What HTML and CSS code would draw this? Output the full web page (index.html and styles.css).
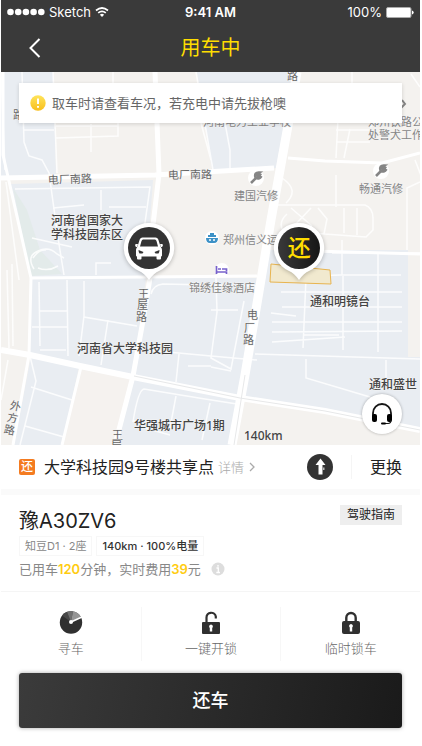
FILE: index.html
```html
<!DOCTYPE html>
<html lang="zh-CN">
<head>
<meta charset="utf-8">
<meta name="viewport" content="width=device-width, initial-scale=1">
<title>用车中</title>
<link rel="stylesheet" href="styles.css">
</head>
<body>
<div class="screen">
  <header class="top">
    <div class="status">
      <div class="status-left">
        <svg class="signal" viewBox="0 0 38 8" aria-hidden="true"><circle cx="3.500" cy="4" r="3.300"/><circle cx="11.200" cy="4" r="3.300"/><circle cx="18.900" cy="4" r="3.300"/><circle cx="26.600" cy="4" r="3.300"/><circle cx="34.300" cy="4" r="3.300"/></svg>
        <span>Sketch</span>
        <svg class="wifi" viewBox="0 0 14 10" aria-hidden="true"><path d="M1 3.500Q7-1.500 13 3.500M3.200 5.900Q7 2.700 10.800 5.900" fill="none" stroke="#fff" stroke-width="1.700"/><path d="M4.900 7.700Q7 6 9.100 7.700L7 9.900Z"/></svg>
      </div>
      <span class="clock">9:41 AM</span>
      <div class="status-right">
        <span>100%</span>
        <svg class="battery" viewBox="0 0 28 11" aria-hidden="true"><rect x=".5" y=".5" width="24.500" height="10" rx="1.500" fill="#fff" stroke="#aaa"/><path d="M26 3.500q1.700.5 1.700 2t-1.700 2z"/></svg>
      </div>
    </div>
    <nav class="nav">
      <button class="back" type="button" aria-label="返回"><svg viewBox="0 0 12 20"><path d="M10.500 1 1.500 10l9 9" fill="none" stroke="#fff" stroke-width="2"/></svg></button>
      <h1>用车中</h1>
    </nav>
  </header>

  <main class="map">
    <svg class="map-canvas" viewBox="1 72 419 373" preserveAspectRatio="xMidYMid slice" role="img" aria-label="地图">
      <rect x="1" y="72" width="419" height="373" fill="#f4f2ef"/>
      <g fill="#e9edf2">
        <path d="M1 72H53L56 174 1 178Z"/>
        <path d="M197 72H294L276 168 212 170Z"/>
        <path d="M10 184 153 180 146 278 133 376 30 353 31 277Z"/>
        <path d="M152 278H257L239 398 134 376Z"/>
        <path d="M31 356 79 367 62 445H14Z"/>
        <path d="M133 379 238 400 230 445H118Z"/>
        <path d="M268 250H408V357H420V430L244 398Z"/>
      </g>
      <path d="M13 188 27 210 40 250 62 274 31 276Z" fill="#e3ebea"/>
      <path d="M81 370 131 379 114 445H64Z" fill="#f5f2ef"/>
      <path d="M156 182H265L257 275H151Z" fill="#f4f2ef"/>
      <g class="lane">
        <path d="M22 72 24 142 29 156 42 160 49 173 58 238 64 275M53 72 57 173M24 130H54M56 138 118 136V119M56 126H118M91 124V152M113 72V84"/>
        <path d="M15 189 150 187 144 230M101 190V210M53 208 84 205M109 207H146M32 238 72 247M33 258Q39 249 46 250M34 269Q26 256 38 251Q49 246 57 254L64 258M58 266Q48 272 38 268"/>
        <path d="M39 282 40 346M67 280 68 356M32 327H67M39 311H67M40 350H66M84 281V317L137 326M84 316 79 356M108 320 101 365M96 275V263H111"/>
        <path d="M6 182 19 280M7 270 9 348M12 264 13 346M8 360 1 400"/>
        <path d="M31 387 72 400M25 426 64 437M30 356 36 381 20 445"/>
        <path d="M151 294Q153 285 163 284L257 286M146 350 211 356 257 360M179 354 176 382M188 366H211"/>
        <path d="M133 422Q138 390 144 389L205 399 237 404M176 396 170 428M210 403 202 440M145 428 170 435M133 421H177"/>
        <path d="M216 278 217 312 211 358 231 369 244 301M211 310H238M211 367 231 371"/>
        <path d="M225 123 230 150V168M196 72 213 170M201 123 211 160M282 178Q300 190 286 203M274 205H365Q373 208 373 218V230L366 237 283 231Q278 222 287 214M291 208 312 226M292 228 311 208M318 208 327 219 324 234M344 208V233M357 208V235M336 175V207"/>
        <path d="M338 118 336 158M352 72V85M336 130H372M336 142H370M350 129 344 158M370 127 395 112 420 126M415 160 422 178M344 118 368 122M411 74 420 87"/>
        <path d="M332 253H420M342 240V275M340 275H401M278 277 340 275M281 292H402M282 307H402M271 313 296 316M272 322H402M272 332 402 331M272 342 345 337M306 278 303 348M343 276V350M378 254V352M255 354 420 359M306 359V378L370 397M386 360V379M304 335H339"/>
        <path d="M420 182 407 188 407 250M1 72 5 170"/>
      </g>
      <g class="road">
        <path stroke-width="3" d="M3 72 3 155 11 190 28 265 31 278 29 355 13 445M31 278 257 276M81 367 62 445M288 158 325 161 382 163 420 153M278 250 420 254"/>
        <path stroke-width="5" d="M1 178 155 175 274 168M155 72 159 174 151 242 150 278 144 315 133 376 115 445"/>
        <path stroke-width="6" d="M1 350 30 355 80 366 133 377 240 398 325 411 420 430"/>
        <path stroke-width="9" d="M297 72 289 120 271 220 245 375 232 445"/>
      </g>
      <g fill="none" stroke="#e7e8e9"><path d="M134 376 240 398 325 411 420 430M245 375 234 445"/></g>
      <path d="M271 264 330 270 331 284 270 282Z" fill="#f1e9cf" stroke="#e8b44f"/>

      <g class="place">
        <text x="51" y="225">河南省国家大</text><text x="51" y="239">学科技园东区</text>
        <text x="77" y="353">河南省大学科技园</text><text x="134" y="430">华强城市广场1期</text>
        <text x="310" y="306">通和明镜台</text><text x="369" y="389">通和盛世</text>
        <text x="244" y="440">140km</text>
      </g>
      <g class="poi">
        <text x="234" y="200">建国汽修</text><text x="359" y="193">畅通汽修</text>
        <text x="223" y="244">郑州信义运</text><text x="189" y="292">锦绣佳缘酒店</text>
        <text x="203" y="126">河南电力工业学校</text><text x="368" y="126">郑州铁路公</text><text x="368" y="139">处警犬工作</text>
      </g>
      <g class="street">
        <text x="48" y="184" transform="rotate(-2 48 184)">电厂南路</text>
        <text x="168" y="179" transform="rotate(-1 168 179)">电厂南路</text>
        <text x="287" y="80">路</text>
        <text x="138" y="298">王</text><text x="137" y="309">屋</text><text x="136" y="321">路</text>
        <text x="247" y="319">电</text><text x="244" y="332">厂</text><text x="243" y="344">路</text>
        <text x="10" y="410" transform="rotate(12 15 406)">外</text><text x="7" y="422" transform="rotate(12 12 418)">方</text><text x="4" y="434" transform="rotate(12 10 430)">路</text>
        <text x="112" y="439">王</text><text x="111" y="450">屋</text>
        <text x="13" y="119">路</text>
      </g>
      <g fill="#fff"><circle cx="256" cy="178" r="8"/><circle cx="381" cy="171" r="8"/><circle cx="222" cy="270" r="7"/></g>
      <g fill="none" stroke="#858585" stroke-width="2.600"><path id="wrench" d="M251 183 257 177M261 173.500 258.500 176.500 256.500 174.500 259.500 172.500Q254 172 255.500 177.500Q259 180 261.500 176"/><use href="#wrench" x="125" y="-7"/></g>
      <g fill="none" stroke="#858585" stroke-width="2"><path d="M402 100 405 104 401 108"/></g>
      <circle cx="212" cy="238" r="7" fill="#fff"/>
      <path d="M206 238H218Q218 243 214 243H210Q206 243 206 238ZM208 235H216V237H208ZM210 233H214V235H210Z" fill="#3d92c7"/><path d="M209 240H211M213 240H215" stroke="#fff" stroke-width="1.500"/>
      <path d="M216.500 266V274M216.500 272H226.500V274M218 269H221M222 269H226.500V271" fill="none" stroke="#7761cb" stroke-width="1.700"/>
    </svg>

    <div class="notice">
      <svg viewBox="0 0 16 16" aria-hidden="true"><defs><linearGradient id="warn" x2="0" y2="1"><stop stop-color="#ffe45b"/><stop offset="1" stop-color="#f8be1c"/></linearGradient></defs><circle cx="8" cy="8" r="7.700" fill="url(#warn)"/><path d="M8 3.500V9M8 11V12.800" stroke="#fff" stroke-width="2"/></svg>
      <span>取车时请查看车况，若充电中请先拔枪噢</span>
    </div>

    <button class="pin pin-car" type="button" aria-label="车辆位置">
      <svg viewBox="0 0 56 62" aria-hidden="true">
        <path d="M28 3A25 25 0 0 1 38 51Q33 53 28 60Q23 53 18 51A25 25 0 0 1 28 3Z" fill="#fff"/>
        <circle cx="28" cy="28" r="21" fill="#333"/>
        <path fill="#fff" d="M21.500 17.500H34.500Q36.500 17.500 37.300 19.500L39.500 26.500Q41 28 41 30V35.500Q41 36.500 40 36.500V38.500Q40 39.500 39 39.500H36.500Q35.500 39.500 35.500 38.500V36.500H20.500V38.500Q20.500 39.500 19.500 39.500H17Q16 39.500 16 38.500V36.500Q15 36.500 15 35.500V30Q15 28 16.500 26.500L18.700 19.500Q19.500 17.500 21.500 17.500ZM14.500 24H17L16 27H15Q13.500 26 14.500 24ZM41.500 24H39L40 27H41Q42.500 26 41.500 24Z"/>
        <path fill="#333" d="M22 19.500H34Q35 19.500 35.500 21L37 26.500H19L20.500 21Q21 19.500 22 19.500ZM17.500 30 22.500 32 21.500 33.500H18.500Q17.500 32 17.500 30ZM38.500 30 33.500 32 34.500 33.500H37.500Q38.500 32 38.500 30Z"/>
      </svg>
    </button>
    <button class="pin pin-return" type="button">
      <svg viewBox="0 0 56 62" aria-hidden="true"><defs><linearGradient id="dark" x2="1"><stop stop-color="#393939"/><stop offset="1" stop-color="#161616"/></linearGradient></defs><path d="M28 3A25 25 0 0 1 38 51Q33 53 28 60Q23 53 18 51A25 25 0 0 1 28 3Z" fill="#fff"/><circle cx="28" cy="28" r="21" fill="url(#dark)"/></svg>
      <span>还</span>
    </button>
    <button class="service" type="button" aria-label="客服">
      <svg viewBox="0 0 24 24" aria-hidden="true"><path d="M3 14V11A9 9 0 0 1 21 11V14" fill="none" stroke="#161616" stroke-width="1.800"/><rect x="2" y="12" width="5" height="8" rx="2"/><rect x="17" y="12" width="5" height="8" rx="2"/><path d="M21 18Q21 21.500 18 21.500H12.500" fill="none" stroke="#161616" stroke-width="1.200"/><rect x="11" y="20.500" width="5" height="2" rx="1"/></svg>
    </button>
  </main>

  <section class="spot">
    <span class="badge">还</span>
    <h2>大学科技园9号楼共享点</h2>
    <a class="detail" href="#">详情<svg viewBox="0 0 6 10" aria-hidden="true"><path d="M1 1 5 5 1 9" fill="none" stroke="#aaa" stroke-width="1.300"/></svg></a>
    <button class="go" type="button" aria-label="导航"><svg viewBox="0 0 26 26"><circle cx="13" cy="13" r="13" fill="#333"/><path d="M13.500 4.500 18.500 11H15.500V20.500H11.500V11H8.500Z" fill="#fff"/><path d="M16 13.500H17.500V16H16Z" fill="#bbb"/></svg></button>
    <button class="change" type="button">更换</button>
  </section>

  <section class="car">
    <div class="car-head"><h2>豫A30ZV6</h2><a class="guide" href="#">驾驶指南</a></div>
    <div class="tags"><span>知豆D1 · 2座</span><span class="strong">140km · 100%电量</span></div>
    <p class="usage"><span>已用车<b>120</b>分钟，实时费用<b>39</b>元</span><svg viewBox="0 0 14 14" aria-hidden="true"><circle cx="7" cy="7" r="6.500" fill="#ddd"/><path d="M7 3V4.700M5.500 6H7.300V10.500M5.300 10.500H9" fill="none" stroke="#fff" stroke-width="1.300"/></svg></p>
  </section>

  <section class="actions">
    <button type="button">
      <svg viewBox="0 0 24 24" aria-hidden="true"><circle cx="12" cy="12.500" r="11.200" fill="#303030"/><path d="M12 12 3 5.500A11.500 11.500 0 0 1 8 1.800Z" fill="#484848"/><path d="M12 12 8 1.800A11.500 11.500 0 0 1 14 1.300Z" fill="#707070"/><path d="M12 12 14 1.300A11.500 11.500 0 0 1 22 7Z" fill="#959595"/><path d="M12 12 23 7" stroke="#fff" stroke-width="1.600"/><circle cx="12" cy="12" r="2" fill="#fff"/></svg>
      <span>寻车</span>
    </button>
    <button type="button">
      <svg viewBox="0 0 24 24" aria-hidden="true"><path d="M7.500 13V7.500A4.700 4.700 0 0 1 16.800 6.500V8.500" fill="none" stroke="#303030" stroke-width="2.200"/><rect x="3" y="12" width="18" height="12" rx="1" fill="#303030"/><path d="M12 14.500A2 2 0 0 1 13.200 18V21.500H10.800V18A2 2 0 0 1 12 14.500Z" fill="#fff"/></svg>
      <span>一键开锁</span>
    </button>
    <button type="button">
      <svg viewBox="0 0 24 24" aria-hidden="true"><path d="M7.300 13V7.700A4.700 4.700 0 0 1 16.700 7.700V13" fill="none" stroke="#303030" stroke-width="2.400"/><rect x="3" y="11" width="18" height="13" rx="2" fill="#303030"/><path d="M12 14A2 2 0 0 1 13.200 17.500V21.500H10.800V17.500A2 2 0 0 1 12 14Z" fill="#fff"/></svg>
      <span>临时锁车</span>
    </button>
  </section>

  <footer class="bottom"><button class="return" type="button">还车</button></footer>
</div>
</body>
</html>
```

FILE: styles.css
```css
* { box-sizing: border-box; }

body {
  margin: 0;
  background: #fff;
  color: #222;
  font-family: Inter, "Noto Sans CJK SC", sans-serif;
  font-size: 13px;
  line-height: 20px;
}

h1, h2, p { margin: 0; font-weight: 400; }
a { color: inherit; text-decoration: none; }
svg { display: block; }

button {
  padding: 0;
  border: 0;
  background: none;
  color: inherit;
  font: inherit;
  cursor: pointer;
}

.screen {
  display: flex;
  flex-direction: column;
  min-height: 100vh;
  padding: 0 2px 0 1px;
}

/* Header */
.top { background: #3a3a3a; color: #fff; }

.status {
  display: grid;
  grid-template-columns: 1fr auto 1fr;
  align-items: center;
  height: 24px;
  padding: 0 6px;
  fill: #fff;
}
.status-left, .status-right { display: flex; align-items: center; gap: 4px; }
.status-right { justify-content: flex-end; }
.signal { width: 38px; height: 8px; }
.wifi { width: 14px; height: 10px; }
.battery { width: 28px; height: 11px; }
.clock { font-weight: 600; }

.nav {
  display: grid;
  grid-template-columns: 40px 1fr 40px;
  align-items: center;
  height: 48px;
  padding: 0 14px;
}
.back { display: flex; align-items: center; justify-content: center; height: 40px; }
.back svg { width: 12px; height: 20px; }
.nav h1 { color: #fd0; font-size: 20px; line-height: 28px; text-align: center; }

/* Map */
.map { position: relative; flex: 1; min-height: 320px; overflow: hidden; }
.map-canvas { position: absolute; inset: 0; width: 100%; height: 100%; }
.lane { fill: none; stroke: #fff; stroke-width: 1.5; opacity: .85; }
.road { fill: none; stroke: #fff; stroke-linejoin: round; }
.place, .poi, .street {
  font-family: "Noto Sans", "Noto Sans CJK SC", sans-serif;
  font-size: 12px;
  paint-order: stroke;
  stroke: #f4f4f4;
  stroke-width: 1px;
}
.place { fill: #444; font-weight: 500; }
.poi { font-size: 11px; fill: #858585; }
.street { font-size: 11px; fill: #666; }

.notice {
  position: relative;
  display: flex;
  align-items: center;
  gap: 6px;
  height: 40px;
  margin: 11px 18px 0;
  padding: 0 11px;
  background: #fff;
  box-shadow: 0 1px 4px rgb(0 0 0 / 15%);
  color: #666;
}
.notice svg { width: 16px; height: 16px; }

.pin {
  position: absolute;
  top: 148px;
  width: 56px;
  height: 62px;
  margin-left: -28px;
}
.pin svg { width: 56px; height: 62px; filter: drop-shadow(0 1px 2px rgb(0 0 0 / 25%)); }
.pin-car { left: 35.4%; }
.pin-return { left: 71.2%; }
.pin span {
  position: absolute;
  inset: 8px 0 auto;
  color: #fd0;
  font-size: 23px;
  font-weight: 500;
  line-height: 40px;
}

.service {
  position: absolute;
  right: 18px;
  bottom: 11px;
  display: grid;
  place-items: center;
  width: 40px;
  height: 40px;
  border-radius: 50%;
  background: #fff;
  box-shadow: 0 0 3px rgb(0 0 0 / 30%);
}
.service svg { width: 24px; height: 24px; }

/* Drop-off spot */
.spot {
  display: flex;
  align-items: center;
  height: 50px;
  padding-left: 18px;
  border-bottom: 6px solid #fafafa;
}
.badge {
  width: 16px;
  height: 16px;
  margin-right: 9px;
  border-radius: 2px;
  background: #f47b20;
  color: #fff;
  font-size: 12px;
  font-weight: 500;
  line-height: 16px;
  text-align: center;
}
.spot h2 { font-size: 16px; line-height: 24px; }
.detail { display: flex; align-items: center; gap: 5px; margin-left: 4px; color: #aaa; font-weight: 300; }
.detail svg { width: 6px; height: 10px; }
.go { margin-left: auto; }
.go svg { width: 26px; height: 26px; }
.change {
  height: 24px;
  margin-left: 18px;
  padding: 0 18px;
  border-left: 1px solid #f5f5f5;
  font-size: 16px;
}

/* Vehicle */
.car { padding: 10px 18px 12px; border-bottom: 1px solid #f5f5f5; }
.car-head { display: flex; align-items: flex-start; justify-content: space-between; }
.car-head h2 { padding-top: 2px; font-size: 20px; line-height: 28px; }
.guide {
  padding: 0 7px;
  background: #eee;
  font-size: 12px;
}
.tags { display: flex; gap: 4px; margin-top: 1px; color: #888; font-size: 11px; line-height: 18px; }
.tags span { padding: 0 5px; border: 1px solid #f7f7f7; }
.tags .strong { color: #333; font-weight: 500; }
.usage { display: flex; align-items: center; gap: 10px; margin-top: 3px; color: #888; }
.usage b { color: #fc1; font-weight: 600; }
.usage svg { width: 14px; height: 14px; }

/* Actions */
.actions { display: grid; grid-template-columns: repeat(3, 1fr); padding: 15px 0 12px; }
.actions button {
  display: flex;
  flex-direction: column;
  align-items: center;
  gap: 4px;
  height: 54px;
  padding-top: 3px;
  color: #666;
  font-weight: 300;
}
.actions button + button { border-left: 1px solid #f7f7f7; }
.actions svg { width: 24px; height: 24px; }

.bottom { padding: 0 18px 18px; }
.return {
  width: 100%;
  height: 55px;
  border-radius: 3px;
  background: linear-gradient(100deg, #3b3b3b, #1a1a1a);
  box-shadow: 0 0 4px rgb(0 0 0 / 35%);
  color: #fff;
  font-size: 18px;
  font-weight: 500;
}
```
